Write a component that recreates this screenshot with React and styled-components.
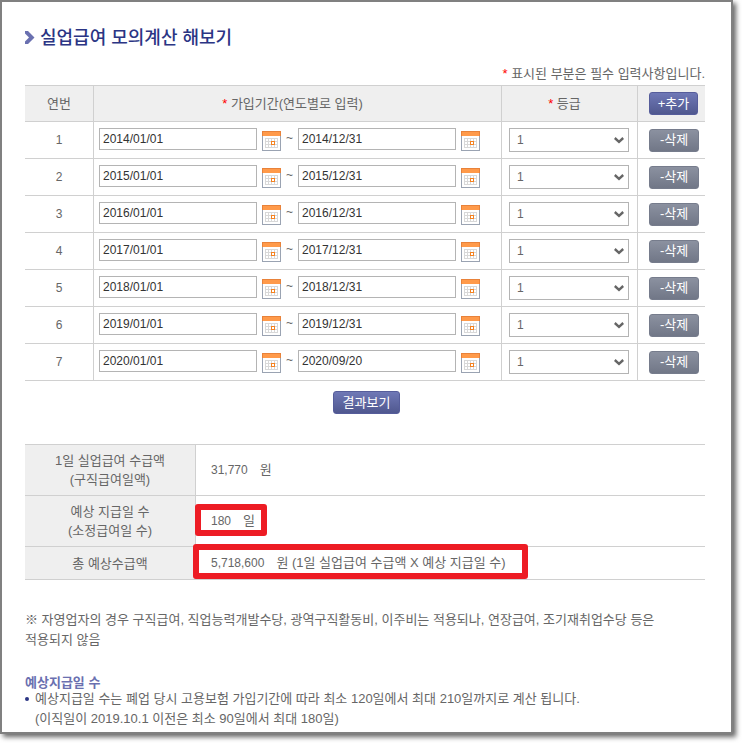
import styled, { createGlobalStyle, css } from "styled-components";
import { useState } from 'react';

const GlobalStyle = createGlobalStyle`
  *, *::before, *::after {
    box-sizing: border-box;
  }
  body {
    margin: 0;
    background-color: #fff;
    color: #666;
    font-family: "Liberation Sans", "Noto Sans CJK KR", sans-serif;
    font-size: 13px;
    line-height: 20px;
    word-break: keep-all;
  }
  input, select, button {
    font-family: inherit;
  }
`

const Panel = styled.main`
  margin: 0 9px 9px 0;
  padding: 23px 26px 3px 23px;
  border: 2px solid #808080;
  background-color: #fff;
  box-shadow: 3px 3px 5px rgba(0,0,0,0.6);
`

const Title = styled.h1`
  display: flex;
  align-items: center;
  gap: 5px;
  margin: 0;
  color: #2b3584;
  font-size: 18px;
  font-weight: 500;
  line-height: 26px;
`

const RequiredNote = styled.p`
  margin: 12px 0 0;
  line-height: 22px;
  text-align: right;
`

const Required = styled.span`
  color: #f00;
`

const Table = styled.table`
  width: 100%;
  table-layout: fixed;
  border-spacing: 0;
  border-top: 1px solid #d0d0d0;
`

const cell = css`
  padding: 0;
  border-bottom: 1px solid #d0d0d0;
  font-weight: 400;
  text-align: center;
  &:not(:last-child){
    border-right: 1px solid #d0d0d0;
  }
`

const HeadCell = styled.th`
  ${cell}
  width: ${({ $width }) => $width || "auto"};
  height: 36px;
  padding-right: ${({ $required }) => $required ? "10px" : "0"};
  background-color: #efefef;
`

const Cell = styled.td`
  ${cell}
  height: 37px;
  font-size: 12px;
`

const Period = styled.div`
  display: flex;
  align-items: flex-start;
  gap: 5px;
  height: 24px;
  padding: 0 21px 0 5px;
`

const DateInput = styled.input`
  flex: 1 1 0;
  min-width: 0;
  height: 22px;
  padding: 0 3px;
  border: 1px solid #b4b4b4;
  background-color: #fff;
  color: #333;
  font-size: 12px;
`

const CalendarButton = styled.button`
  width: 19px;
  height: 20px;
  margin-top: 3px;
  padding: 0;
  border: 0;
  background: none;
  cursor: pointer;
  svg {
    display: block;
  }
`

const Tilde = styled.span`
  width: 7px;
`

const SelectBox = styled.div`
  display: grid;
  align-items: center;
  width: 120px;
  margin: 0 7px;
  > * {
    grid-area: 1 / 1;
  }
  svg {
    justify-self: end;
    margin-right: 5px;
    pointer-events: none;
  }
`

const GradeSelect = styled.select`
  width: 100%;
  height: 24px;
  padding: 0 7px;
  border: 1px solid #b4b4b4;
  border-radius: 0;
  background-color: #fff;
  color: #666;
  font-size: 12px;
  appearance: none;
`

const Button = styled.button`
  height: 23px;
  min-width: ${({ $wide }) => $wide ? "67px" : "49px"};
  padding: 0 7px;
  border: 1px solid #565d9b;
  border-radius: 3px;
  background: linear-gradient(#6f78b6, #50588f);
  color: #fff;
  font-size: 13px;
  line-height: 18px;
  white-space: nowrap;
  cursor: pointer;
`

const DeleteButton = styled(Button)`
  min-width: 50px;
  border-color: #767c8c;
  background: linear-gradient(#8b91a0, #717787);
`

const ButtonSlot = styled.div`
  display: flex;
  padding-left: 11px;
`

const Actions = styled.div`
  display: flex;
  justify-content: center;
  margin: 10px 0 30px;
  padding-left: 3px;
`

const ResultHead = styled.th`
  ${cell}
  width: 171px;
  height: ${({ $tall }) => $tall ? "51px" : "33px"};
  background-color: #efefef;
  line-height: 19px;
`

const ResultCell = styled.td`
  ${cell}
  position: relative;
  padding-left: 15px;
  text-align: left;
`

const Value = styled.span`
  margin-right: 12px;
  font-size: 12px;
`

const Highlight = styled.span`
  position: absolute;
  top: ${({ $top }) => $top}px;
  left: ${({ $left }) => $left}px;
  width: ${({ $width }) => $width}px;
  height: ${({ $height }) => $height}px;
  border: 6px solid #ed1c24;
  border-radius: 3px;
  pointer-events: none;
`

const Remark = styled.p`
  margin: 30px 0 0;
`

const SubTitle = styled.h2`
  margin: 27px 0 0;
  color: #6a70b0;
  font-size: 13px;
  font-weight: 700;
  line-height: 12px;
`

const Guide = styled.ul`
  margin: 0;
  padding: 0;
  list-style: none;
  li {
    display: flex;
    gap: 6px;
  }
  li::before {
    content: "";
    width: 4px;
    height: 4px;
    margin-top: 8px;
    border-radius: 50%;
    background-color: #2b3584;
  }
`

const initialRows = [
  { id: 1, from: "2014/01/01", to: "2014/12/31" },
  { id: 2, from: "2015/01/01", to: "2015/12/31" },
  { id: 3, from: "2016/01/01", to: "2016/12/31" },
  { id: 4, from: "2017/01/01", to: "2017/12/31" },
  { id: 5, from: "2018/01/01", to: "2018/12/31" },
  { id: 6, from: "2019/01/01", to: "2019/12/31" },
  { id: 7, from: "2020/01/01", to: "2020/09/20" },
]

function TitleArrow(){
  return (
    <svg width="10" height="14" viewBox="0 0 10 14" aria-hidden="true">
      <path d="M0 0H3L9.5 6.5L3 13H0V10.5L4 6.5L0 2.5Z" fill="#6a70b0"/>
    </svg>
  )
}

function CalendarIcon(){
  return (
    <svg width="19" height="20" viewBox="0 0 19 20" shapeRendering="crispEdges" aria-hidden="true">
      <rect width="19" height="20" fill="#9aa3b2"/>
      <rect x="1" y="5" width="17" height="14" fill="#fff"/>
      <rect width="19" height="5" fill="#e8823a"/>
      <rect x="1" y="1" width="17" height="4" fill="#ff9a4a"/>
      <rect x="3" y="7" width="13" height="10" fill="#d8d8d8"/>
      <path d="M4 8h2v2h-2zM7 8h2v2h-2zM10 8h2v2h-2zM13 8h2v2h-2zM4 11h2v2h-2zM7 11h2v2h-2zM13 11h2v2h-2zM4 14h2v2h-2zM7 14h2v2h-2zM10 14h2v2h-2zM13 14h2v2h-2z" fill="#fff"/>
      <rect x="9" y="10" width="4" height="4" fill="#f58220"/>
      <rect x="10" y="11" width="2" height="2" fill="#fff"/>
    </svg>
  )
}

function SelectArrow(){
  return (
    <svg width="10" height="7" viewBox="0 0 10 7" aria-hidden="true">
      <path d="M0.8 1L5 4.8L9.2 1" fill="none" stroke="#666" strokeWidth="2.4"/>
    </svg>
  )
}

function PeriodRow({row, number, onDelete}){
  return (
    <tr>
      <Cell>{number}</Cell>
      <Cell>
        <Period>
          <DateInput type="text" defaultValue={row.from} aria-label={`${number} 시작일`}/>
          <CalendarButton type="button" aria-label="시작일 선택"><CalendarIcon/></CalendarButton>
          <Tilde>~</Tilde>
          <DateInput type="text" defaultValue={row.to} aria-label={`${number} 종료일`}/>
          <CalendarButton type="button" aria-label="종료일 선택"><CalendarIcon/></CalendarButton>
        </Period>
      </Cell>
      <Cell>
        <SelectBox>
          <GradeSelect aria-label={`${number} 등급`} defaultValue="1">
            {[1, 2, 3, 4, 5, 6, 7].map(grade => <option key={grade} value={grade}>{grade}</option>)}
          </GradeSelect>
          <SelectArrow/>
        </SelectBox>
      </Cell>
      <Cell>
        <ButtonSlot>
          <DeleteButton type="button" onClick={() => onDelete(row.id)}>-삭제</DeleteButton>
        </ButtonSlot>
      </Cell>
    </tr>
  )
}

export default function App(){
  const [rows, setRows] = useState(initialRows);
  const [nextId, setNextId] = useState(8);

  const handleAdd = () => {
    setRows([...rows, { id: nextId, from: "", to: "" }]);
    setNextId(nextId + 1);
  }

  const handleDelete = (id) => {
    setRows(rows.filter(row => row.id !== id));
  }

  return (
    <>
      <GlobalStyle/>
      <Panel>
        <Title><TitleArrow/>실업급여 모의계산 해보기</Title>
        <RequiredNote><Required>*</Required> 표시된 부분은 필수 입력사항입니다.</RequiredNote>
        <Table>
          <thead>
            <tr>
              <HeadCell $width="69px">연번</HeadCell>
              <HeadCell $required><Required>*</Required> 가입기간(연도별로 입력)</HeadCell>
              <HeadCell $required $width="136px"><Required>*</Required> 등급</HeadCell>
              <HeadCell $width="67px">
                <ButtonSlot>
                  <Button type="button" onClick={handleAdd}>+추가</Button>
                </ButtonSlot>
              </HeadCell>
            </tr>
          </thead>
          <tbody>
            {rows.map((row, index) => (
              <PeriodRow key={row.id} row={row} number={index + 1} onDelete={handleDelete}/>
            ))}
          </tbody>
        </Table>
        <Actions>
          <Button type="button" $wide>결과보기</Button>
        </Actions>
        <Table>
          <tbody>
            <tr>
              <ResultHead $tall>1일 실업급여 수급액<br/>(구직급여일액)</ResultHead>
              <ResultCell><Value>31,770</Value>원</ResultCell>
            </tr>
            <tr>
              <ResultHead $tall>예상 지급일 수<br/>(소정급여일 수)</ResultHead>
              <ResultCell>
                <Value>180</Value>일
                <Highlight $top={8} $left={-1} $width={72} $height={32}/>
              </ResultCell>
            </tr>
            <tr>
              <ResultHead>총 예상수급액</ResultHead>
              <ResultCell>
                <Value>5,718,600</Value>원 (1일 실업급여 수급액 X 예상 지급일 수)
                <Highlight $top={-3} $left={-3} $width={335} $height={35}/>
              </ResultCell>
            </tr>
          </tbody>
        </Table>
        <Remark>
          ※ 자영업자의 경우 구직급여, 직업능력개발수당, 광역구직활동비, 이주비는 적용되나, 연장급여, 조기재취업수당 등은 적용되지 않음
        </Remark>
        <SubTitle>예상지급일 수</SubTitle>
        <Guide>
          <li>
            <span>
              예상지급일 수는 폐업 당시 고용보험 가입기간에 따라 최소 120일에서 최대 210일까지로 계산 됩니다.<br/>
              (이직일이 2019.10.1 이전은 최소 90일에서 최대 180일)
            </span>
          </li>
        </Guide>
      </Panel>
    </>
  )
}
